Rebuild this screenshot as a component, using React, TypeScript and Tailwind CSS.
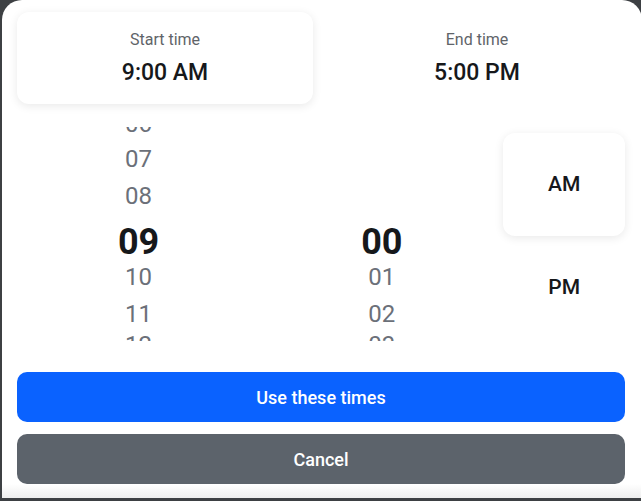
import React from "react";

type Item = { v: string; sel: boolean; h?: string };

const hours: Item[] = [
  { v: "06", sel: false, h: "h-[32px]" },
  { v: "07", sel: false },
  { v: "08", sel: false },
  { v: "09", sel: true },
  { v: "10", sel: false },
  { v: "11", sel: false },
  { v: "12", sel: false, h: "h-[26px]" },
];

const minutes: Item[] = [
  { v: "00", sel: true },
  { v: "01", sel: false },
  { v: "02", sel: false },
  { v: "03", sel: false, h: "h-[26px]" },
];

function WheelItem({ v, sel, h }: Item) {
  if (sel) {
    return (
      <div className="h-[56px] shrink-0 mb-[-12px] flex items-center justify-center text-[36px] leading-none font-bold text-[#16181b]">
        {v}
      </div>
    );
  }
  return (
    <div
      className={`${h ?? "h-[37px]"} shrink-0 flex items-center justify-center text-[24px] leading-none text-[#6b7079]`}
    >
      {v}
    </div>
  );
}

export default function App() {
  return (
    <div
      className="w-[641px] h-[501px] bg-[#3d4043] overflow-hidden"
      style={{ fontFamily: "Roboto, 'Noto Sans', sans-serif" }}
    >
      <div className="ml-[2px] w-[640px] h-[498px] bg-white rounded-t-[20px] flex flex-col pl-[15px] pr-[17px] pt-[12px] relative">
        {/* time summary */}
        <div className="grid grid-cols-2 gap-4 h-[92px] shrink-0">
          <div className="bg-white rounded-[12px] shadow-[0_2px_10px_rgba(0,0,0,0.09)] flex flex-col items-center justify-center gap-[9px]">
            <div className="text-[16px] leading-[20px] text-[#5f6469]">Start time</div>
            <div className="text-[23px] leading-[28px] font-medium text-[#16181b]">9:00 AM</div>
          </div>
          <div className="flex flex-col items-center justify-center gap-[9px]">
            <div className="text-[16px] leading-[20px] text-[#5f6469]">End time</div>
            <div className="text-[23px] leading-[28px] font-medium text-[#16181b]">5:00 PM</div>
          </div>
        </div>

        {/* wheels */}
        <div className="mt-[23px] h-[214px] grid grid-cols-[2fr_2fr_1fr] shrink-0">
          <div className="overflow-hidden h-[214px]">
            <div className="flex flex-col mt-[-19px]">
              {hours.map((h) => (
                <WheelItem key={h.v} {...h} />
              ))}
            </div>
          </div>
          <div className="overflow-hidden h-[214px]">
            <div className="flex flex-col mt-[87px]">
              {minutes.map((m) => (
                <WheelItem key={m.v} {...m} />
              ))}
            </div>
          </div>
          <div className="flex flex-col pt-[6px]">
            <div className="h-[103px] shrink-0 bg-white rounded-[12px] shadow-[0_2px_10px_rgba(0,0,0,0.09)] flex items-center justify-center text-[21px] font-medium text-[#16181b]">
              AM
            </div>
            <div className="h-[103px] shrink-0 flex items-center justify-center text-[21px] font-medium text-[#16181b]">
              PM
            </div>
          </div>
        </div>

        {/* buttons */}
        <div className="mt-[31px] flex flex-col gap-[12px]">
          <button className="h-[50px] rounded-[10px] bg-[#0a62ff] text-white text-[18px] font-medium">
            Use these times
          </button>
          <button className="h-[50px] rounded-[10px] bg-[#5c636b] text-white text-[18px] font-medium">
            Cancel
          </button>
        </div>

        <div className="absolute left-0 right-0 bottom-0 h-[14px] bg-gradient-to-b from-white to-[#eeeeee]" />
      </div>
    </div>
  );
}
